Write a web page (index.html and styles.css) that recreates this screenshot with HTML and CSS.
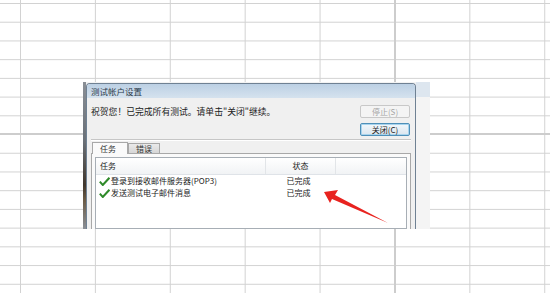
FILE: index.html
```html
<!DOCTYPE html>
<html lang="zh">
<head>
<meta charset="utf-8">
<link rel="stylesheet" href="styles.css">
</head>
<body>
<div class="sheet">
  <div class="thick-row left"></div>
  <div class="thick-row right"></div>
  <div class="thick-col"></div>
  <div class="shot">
    <div class="edge"></div>
    <div class="window">
      <div class="titlebar">测试帐户设置</div>
      <div class="body">
        <div class="top">
          <div class="msg">祝贺您！已完成所有测试。请单击"关闭"继续。</div>
          <div class="buttons">
            <div class="btn disabled">停止(S)</div>
            <div class="btn focus">关闭(C)</div>
          </div>
        </div>
        <div class="sep"></div>
        <div class="tabs">
          <div class="tab active">任务</div>
          <div class="tab">错误</div>
        </div>
        <div class="panel">
          <div class="list">
            <div class="row head">
              <div class="c1">任务</div>
              <div class="c2">状态</div>
              <div class="c3"></div>
            </div>
            <div class="row">
              <div class="c1"><svg class="check" width="11" height="9" viewBox="0 0 11 9"><path d="M0.8 4.6 L3.8 8 L10.4 0.8" fill="none" stroke="#2f8a2a" stroke-width="2"/></svg>登录到接收邮件服务器(POP3)</div>
              <div class="c2">已完成</div>
              <div class="c3"></div>
            </div>
            <div class="row">
              <div class="c1"><svg class="check" width="11" height="9" viewBox="0 0 11 9"><path d="M0.8 4.6 L3.8 8 L10.4 0.8" fill="none" stroke="#2f8a2a" stroke-width="2"/></svg>发送测试电子邮件消息</div>
              <div class="c2">已完成</div>
              <div class="c3"></div>
            </div>
          </div>
        </div>
      </div>
    </div>
    <div class="side">
      <div class="side-top"></div>
    </div>
  </div>
  <svg class="arrow" width="550" height="293" viewBox="0 0 550 293">
    <path d="M324 192 L338 190 L335 195 L388 223 L332 199 L330 203 Z" fill="#e8231f"/>
  </svg>
</div>
</body>
</html>
```

FILE: styles.css
```css
html, body {
  margin: 0;
  padding: 0;
}
body {
  width: 550px;
  height: 293px;
  overflow: hidden;
  background: #fff;
  font-family: "Noto Sans CJK SC", "Liberation Sans", sans-serif;
  color: #222;
}
.sheet {
  position: relative;
  width: 550px;
  height: 293px;
  background-color: #fff;
  background-image:
    linear-gradient(to right, #d2d2d2 1px, transparent 1px),
    linear-gradient(to bottom, #d2d2d2 1px, transparent 1px);
  background-size: 74.9px 100%, 100% 18.72px;
  background-position: 20px 0, 0 3px;
}
.thick-row {
  position: absolute;
  top: 133px;
  height: 2px;
  background: #cdcdcd;
}
.thick-row.left { left: 0; width: 84px; }
.thick-row.right { left: 430px; width: 120px; }
.thick-col {
  position: absolute;
  left: 394px;
  top: 0;
  width: 2px;
  height: 293px;
  background: #cdcdcd;
}

.shot {
  position: absolute;
  left: 83px;
  top: 82px;
  width: 347px;
  height: 147px;
  display: flex;
  background: #f3f3f3;
}
.edge {
  width: 3px;
  background: linear-gradient(to bottom, #8a8f96 0%, #6a7077 40%, #40362c 70%, #6b5a44 80%, #8a8f96 100%);
}
.window {
  width: 328px;
  margin-top: 1px;
  border: 1px solid #6f8193;
  border-bottom: none;
  border-radius: 4px 4px 0 0;
  background: #f0f0f0;
  display: flex;
  flex-direction: column;
  overflow: hidden;
}
.titlebar {
  height: 14px;
  line-height: 14px;
  padding-left: 4px;
  font-size: 8.5px;
  color: #2a3a4a;
  background: linear-gradient(to bottom, #bcd0e4, #d5e2ee);
}
.body {
  padding: 0 4px 0 4px;
  display: flex;
  flex-direction: column;
}
.top {
  display: flex;
  justify-content: space-between;
  padding-top: 7px;
}
.msg {
  font-size: 8.8px;
  line-height: 12px;
  margin-top: 1px;
  color: #1a1a1a;
}
.buttons {
  display: flex;
  flex-direction: column;
  gap: 5px;
  margin-right: 1px;
}
.btn {
  width: 48px;
  height: 11px;
  line-height: 11px;
  font-size: 8px;
  text-align: center;
  border: 1px solid #9aa3ab;
  border-radius: 2px;
  background: linear-gradient(to bottom, #f6f6f6, #e2e2e2);
  color: #222;
}
.btn.disabled {
  color: #a5a5a5;
  border-color: #c8c8c8;
  background: #f4f4f4;
}
.btn.focus {
  border-color: #4f8fb8;
  box-shadow: inset 0 0 0 1px #a8d4ee;
  background: linear-gradient(to bottom, #f2f7fb, #dbe6ef);
}
.sep {
  margin-top: 3px;
  height: 1px;
  border-top: 1px solid #c6c6c6;
  background: #fff;
}
.tabs {
  display: flex;
  align-items: flex-end;
  margin-top: 1px;
  height: 11px;
  padding-left: 1px;
}
.tab {
  font-size: 8px;
  line-height: 9px;
  height: 9px;
  padding: 0 7px;
  border: 1px solid #a8a8a8;
  border-bottom: none;
  background: linear-gradient(to bottom, #eaeaea, #d6d6d6);
  color: #333;
}
.tab.active {
  height: 11px;
  line-height: 11px;
  width: 20px;
  background: #fafafa;
  position: relative;
  top: 1px;
}
.panel {
  border: 1px solid #a8a8a8;
  background: #fafafa;
  padding: 3px 3px 2px 3px;
  height: 72px;
}
.list {
  border: 1px solid #a7aeb5;
  background: #fff;
  height: 70px;
}
.row {
  display: flex;
  font-size: 8px;
  height: 12px;
  line-height: 12px;
  color: #222;
}
.row.head {
  height: 16px;
  line-height: 16px;
  background: linear-gradient(to bottom, #ffffff, #f1f3f5);
  border-bottom: 1px solid #dfe3e8;
  margin-bottom: 0;
}
.c1 {
  width: 165px;
  padding-left: 3px;
  display: flex;
  align-items: center;
}
.c2 {
  width: 69px;
  text-align: center;
}
.c3 {
  flex: 1;
}
.row.head .c1,
.row.head .c2 {
  border-right: 1px solid #e2e5e8;
}
.row.head .c1 {
  padding-left: 4px;
}
.check {
  margin-right: 1px;
  flex: none;
}
.side {
  flex: 1;
  background: #f4f4f4;
}
.side-top {
  height: 15px;
  background: #dde6ef;
}
.arrow {
  position: absolute;
  left: 0;
  top: 0;
  pointer-events: none;
}
```
